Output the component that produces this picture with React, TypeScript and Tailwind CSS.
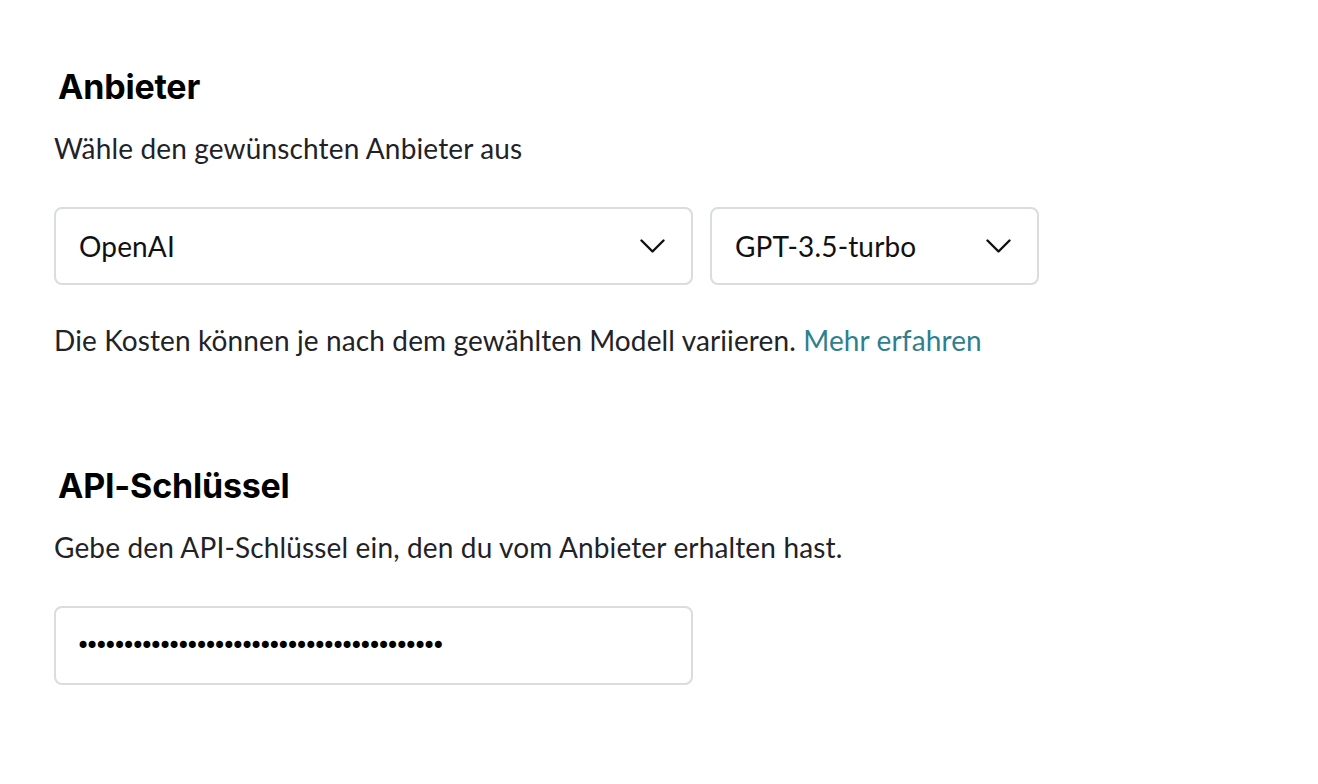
import React from 'react';

const Chevron: React.FC = () => (
  <svg width="25" height="14" viewBox="0 0 25 14" fill="none" className="flex-shrink-0">
    <polyline points="1.5,1.5 12.5,12.5 23.5,1.5" stroke="#111111" strokeWidth="2.4" strokeLinecap="round" strokeLinejoin="round" />
  </svg>
);

interface SelectBoxProps {
  value: string;
  widthClass: string;
}

const SelectBox: React.FC<SelectBoxProps> = ({ value, widthClass }) => (
  <div className={`flex items-center justify-between h-[78px] pl-[23px] pr-[26px] border-2 border-[#d9dce1] rounded-lg bg-white ${widthClass}`}>
    <span className="text-[28px] leading-[32px] tracking-[0.15px] text-[#111111]">{value}</span>
    <Chevron />
  </div>
);

const App: React.FC = () => {
  const dots = '•'.repeat(40);

  return (
    <div className="min-h-screen bg-white pl-[54px] pt-[67px] font-['Lato','Noto_Sans',sans-serif] text-[#1f2328]">
      {/* Anbieter */}
      <section className="mb-[110px]">
        <h2 className="ml-1 font-['Inter',sans-serif] font-bold text-[34px] leading-[40px] text-black tracking-[-0.2px]">
          Anbieter
        </h2>
        <p className="mt-[25px] text-[28px] leading-[32px] tracking-[0.15px]">Wähle den gewünschten Anbieter aus</p>
        <div className="flex gap-[17px] mt-[43px]">
          <SelectBox value="OpenAI" widthClass="w-[639px]" />
          <SelectBox value="GPT-3.5-turbo" widthClass="w-[329px]" />
        </div>
        <p className="mt-[39px] text-[28px] leading-[32px] tracking-[0.12px]">
          Die Kosten können je nach dem gewählten Modell variieren.{' '}
          <a href="#" className="text-[#2f7f8f]">Mehr erfahren</a>
        </p>
      </section>

      {/* API-Schlüssel */}
      <section>
        <h2 className="ml-1 font-['Inter',sans-serif] font-bold text-[34px] leading-[40px] text-black tracking-[-0.2px]">
          API-Schlüssel
        </h2>
        <p className="mt-[25px] text-[28px] leading-[32px] tracking-[0.15px]">Gebe den API-Schlüssel ein, den du vom Anbieter erhalten hast.</p>
        <div className="flex items-center w-[639px] h-[79px] mt-[43px] pl-[20px] border-2 border-[#d9dce1] rounded-lg bg-white">
          <span className="font-['DejaVu_Sans',sans-serif] text-[24px] leading-[32px] tracking-[-5.05px] text-black">{dots}</span>
        </div>
      </section>
    </div>
  );
};

export default App;
